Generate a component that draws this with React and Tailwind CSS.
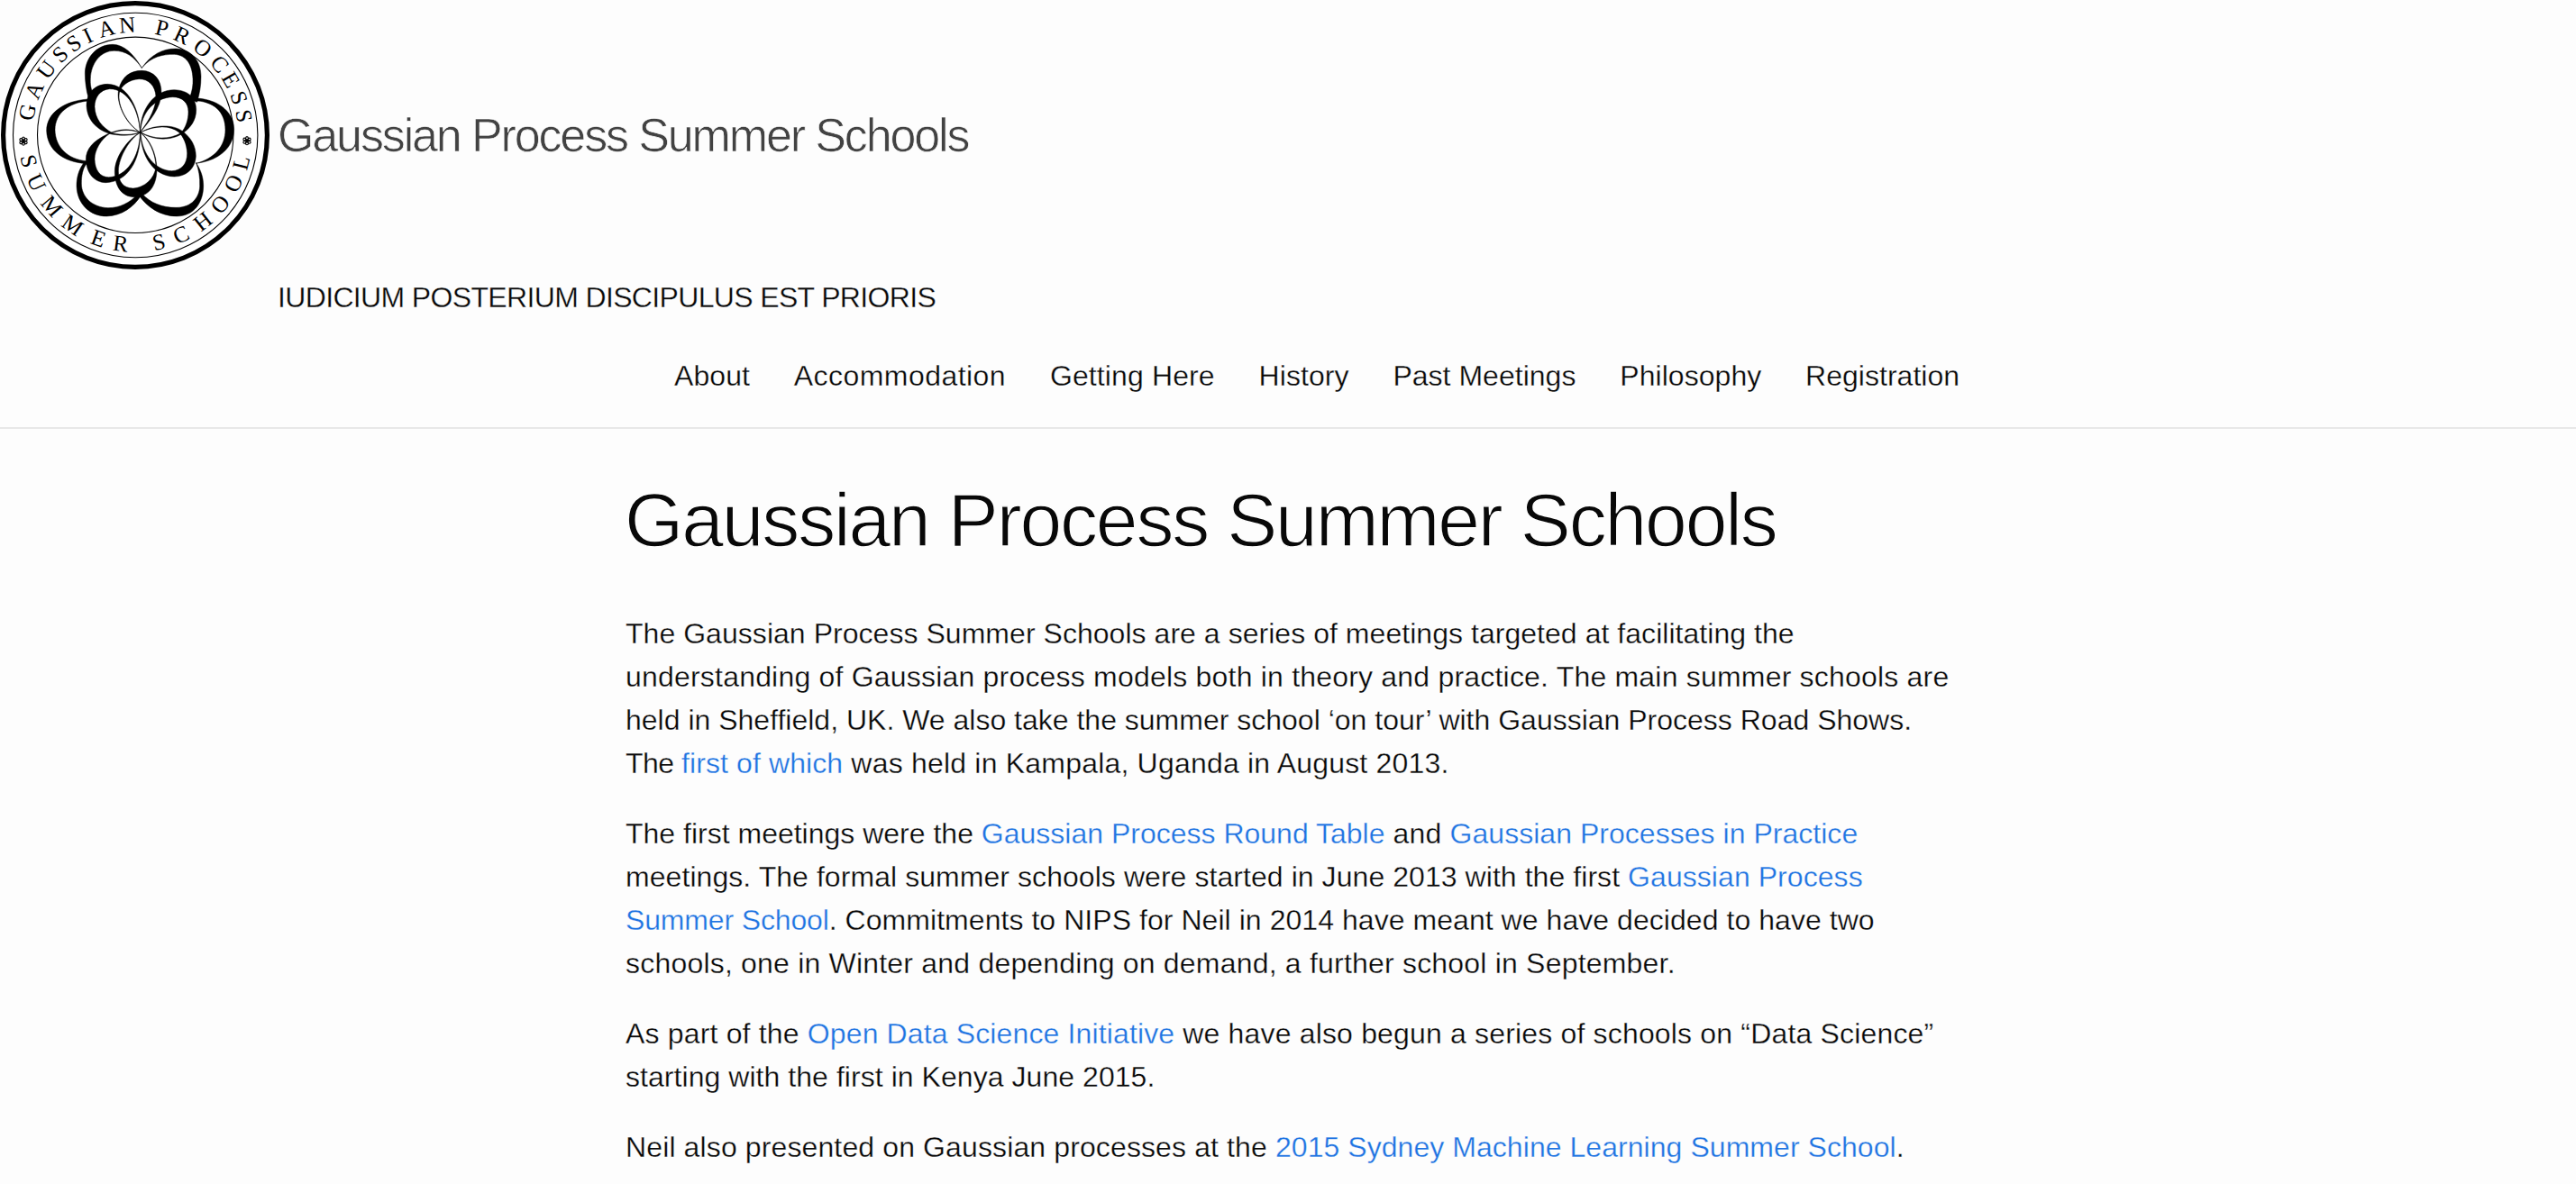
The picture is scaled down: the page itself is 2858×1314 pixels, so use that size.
const TOP_LETTERS = [
  ["G", -78], ["A", -66], ["U", -53.6], ["S", -42.8], ["S", -33.7], ["I", -25.4], ["A", -15.1], ["N", -4.1],
  ["P", 14.1], ["R", 25.2], ["O", 37.7], ["C", 49.9], ["E", 59.9], ["S", 70.2], ["S", 80],
];
const BOTTOM_LETTERS = [
  ["S", 76.3], ["U", 64.4], ["M", 49.5], ["M", 34.8], ["E", 19.6], ["R", 7.6],
  ["S", -12.5], ["C", -24.7], ["H", -38.1], ["O", -50.8], ["O", -63.9], ["L", -75.5],
];

// Each petal is an outer contour followed by an inner one, filled even-odd.
const OUTER_PETALS = [
  "M473 228 C445 180 412 148 375 148 C320 148 283 195 283 245 C283 270 287 300 294 325 L312 318 C302 295 300 280 301 262 C303 210 335 169 380 169 C418 169 446 188 473 228Z",
  "M472 226 C503 182 540 162 585 162 C640 164 669 205 669 255 C669 285 665 310 656 340 L630 330 C640 302 643 285 642 262 C640 215 620 183 580 181 C540 181 505 188 472 226Z",
  "M640 327 C720 325 779 370 779 430 C779 490 730 535 652 544 C715 528 750 485 750 432 C750 375 715 335 640 335Z",
  "M652 541 C668 565 677 590 677 618 C677 675 645 720 588 720 C535 720 490 690 462 650 L473 645 C500 675 540 692 588 691 C640 690 664 655 665 620 C666 590 662 565 652 541Z",
  "M280 540 C262 565 255 590 255 620 C257 680 300 720 355 720 C405 718 445 690 470 650 L455 650 C430 675 400 692 360 692 C305 690 272 655 271 612 C271 585 275 562 288 545Z",
  "M294 330 C215 335 155 375 155 435 C157 500 210 540 288 545 L288 536 C225 530 184 490 183 432 C184 375 230 342 294 336Z",
];
const INNER_PETALS = [
  "M467 441 C420 415 385 345 395 298 C405 255 435 235 472 235 C512 236 538 265 537 310 C535 360 500 400 467 441Z M466 440 C500 398 520 355 519 322 C517 285 495 263 463 263 C430 265 402 285 397 310 C390 350 423 414 466 440Z",
  "M467 441 C465 370 430 282 358 280 C315 280 288 310 288 352 C290 405 330 437 372 447 C410 453 440 452 467 441Z M466 440 C463 370 427 296 365 296 C333 298 315 325 315 355 C316 395 340 425 375 443 C410 451 440 449 466 440Z",
  "M467 441 C465 370 510 299 580 299 C625 300 653 325 653 365 C653 400 635 425 608 444 C570 470 510 468 467 441Z M468 440 C469 375 515 325 575 323 C607 323 627 342 627 372 C627 400 618 425 602 443 C562 466 510 464 468 440Z",
  "M467 441 C510 415 575 412 608 437 C635 458 652 485 652 520 C650 562 620 588 580 588 C510 586 470 520 467 441Z M468 441 C472 515 518 568 572 569 C605 568 623 545 623 510 C622 480 610 455 595 440 C565 416 515 418 468 441Z",
  "M467 441 C435 455 383 515 382 570 C382 622 405 655 447 656 C495 655 522 620 522 562 C521 510 498 462 467 441Z M467 442 C435 459 395 520 394 570 C394 605 410 626 443 627 C480 625 515 595 519 555 C518 510 495 463 467 442Z",
  "M467 441 C430 425 390 430 355 448 C310 470 286 495 286 532 C288 578 315 608 352 608 C425 606 468 535 467 441Z M466 442 C430 428 400 433 365 445 C335 465 315 500 315 530 C316 565 332 590 362 590 C420 588 465 525 466 442Z",
];

function Rosette({ x, y }) {
  return (
    <g transform={`translate(${x} ${y})`} fill="none" stroke="#000" strokeWidth="1.1">
      {[0, 60, 120, 180, 240, 300].map((a) => (
        <ellipse key={a} cx="0" cy="-2.5" rx="1.5" ry="2.1" transform={`rotate(${a})`} />
      ))}
    </g>
  );
}

function Seal() {
  return (
    <svg viewBox="0 0 300 300" className="size-[300px] shrink-0" role="img" aria-label="Gaussian Process Summer School">
      <circle cx="150" cy="150" r="146.4" fill="#fff" stroke="#000" strokeWidth="5.2" />
      <circle cx="150.2" cy="150" r="135.7" fill="none" stroke="#000" strokeWidth="1.1" />
      <circle cx="150.2" cy="149.8" r="108.7" fill="none" stroke="#000" strokeWidth="1.1" />
      <g transform="scale(0.33333)" fillRule="evenodd" stroke="#000" strokeWidth="1.4">
        {OUTER_PETALS.map((d) => (
          <path key={d} d={d} />
        ))}
        {INNER_PETALS.map((d) => (
          <path key={d} d={d} />
        ))}
      </g>
      <Rosette x={26} y={156.6} />
      <Rosette x={274} y={156.2} />
      <g
        transform="translate(150 150)"
        textAnchor="middle"
        className="font-['Liberation_Serif',serif] text-[25px] [-webkit-text-stroke:0.5px_#000]"
      >
        {TOP_LETTERS.map(([c, a], i) => (
          <text key={i} y="-114.2" fill="#000" transform={`rotate(${a})`}>{c}</text>
        ))}
        {BOTTOM_LETTERS.map(([c, a], i) => (
          <text key={i} y="129.8" fill="#000" transform={`rotate(${a})`}>{c}</text>
        ))}
      </g>
    </svg>
  );
}

const NAV = [
  ["About", "tracking-[0.07px]"],
  ["Accommodation", "tracking-[0.45px]"],
  ["Getting Here", "tracking-[0.12px]"],
  ["History", "tracking-[0.07px]"],
  ["Past Meetings", "tracking-[0.02px]"],
  ["Philosophy", "tracking-[0.05px]"],
  ["Registration", "tracking-[0.02px]"],
];

function Line({ className = "", children }) {
  return <span className={`block whitespace-nowrap ${className}`}>{children}</span>;
}

function Link({ className = "", children }) {
  return <a href="#" className={`text-[#1f74e2] ${className}`}>{children}</a>;
}

export default function App() {
  return (
    <div className="h-[1314px] overflow-hidden bg-[#fdfdfd] font-['Liberation_Sans',Arial,sans-serif] text-[32px] leading-[48px] text-[#080808] [-webkit-text-stroke:0.3px_#fdfdfd]">
      <header className="h-[476px] border-b-2 border-[#e8e8e8]">
        <div className="flex h-[300px] items-center gap-[8px]">
          <Seal />
          <a href="#" className="whitespace-nowrap text-[52px] leading-[56px] tracking-[-2.13px] text-[#424242] [-webkit-text-stroke:0.7px_#fdfdfd]">
            Gaussian Process Summer Schools
          </a>
        </div>
        <p className="mt-[6px] pl-[308px] tracking-[-0.65px]">IUDICIUM POSTERIUM DISCIPULUS EST PRIORIS</p>
        <nav className="mt-[39px] flex gap-[48.8px] pl-[748px]">
          {NAV.map(([label, cls]) => (
            <a key={label} href="#" className={cls}>{label}</a>
          ))}
        </nav>
      </header>

      <main className="pl-[694px] pt-[59px]">
        <h1 className="-ml-px mb-[60px] whitespace-nowrap text-[84px] leading-[84px] tracking-[-2.16px] [-webkit-text-stroke:1.4px_#fdfdfd]">
          Gaussian Process Summer Schools
        </h1>
        <div className="flex flex-col gap-[30px]">
          <p>
            <Line className="tracking-[0.04px]">The Gaussian Process Summer Schools are a series of meetings targeted at facilitating the</Line>
            <Line className="tracking-[0.2px]">understanding of Gaussian process models both in theory and practice. The main summer schools are</Line>
            <Line>held in Sheffield, UK. We also take the summer school ‘on tour’ with Gaussian Process Road Shows.</Line>
            <Line className="tracking-[0.2px]">
              <span className="tracking-[-0.5px]">The </span>
              <Link className="tracking-[0.1px]">first of which</Link> was held in Kampala, Uganda in August 2013.
            </Line>
          </p>
          <p>
            <Line>
              The first meetings were the <Link>Gaussian Process Round Table</Link> <span className="tracking-[0.3px]">and</span>{" "}
              <Link className="tracking-[0.03px]">Gaussian Processes in Practice</Link>
            </Line>
            <Line className="tracking-[0.06px]">
              meetings. The formal summer schools were started in June 2013 with the first <Link>Gaussian Process</Link>
            </Line>
            <Line className="tracking-[0.05px]">
              <Link className="tracking-[-0.15px]">Summer School</Link>. Commitments to NIPS for Neil in 2014 have meant we have decided to have two
            </Line>
            <Line className="tracking-[0.2px]">schools, one in Winter and depending on demand, a further school in September.</Line>
          </p>
          <p>
            <Line className="tracking-[0.17px]">
              As part of the <Link className="tracking-[0.13px]">Open Data Science Initiative</Link> we have also begun a series of schools on “Data Science”
            </Line>
            <Line className="tracking-[0.05px]">starting with the first in Kenya June 2015.</Line>
          </p>
          <p>
            <Line className="tracking-[0.12px]">
              Neil also presented on Gaussian processes at the <Link className="tracking-[0.05px]">2015 Sydney Machine Learning Summer School</Link>.
            </Line>
          </p>
        </div>
      </main>
    </div>
  );
}
